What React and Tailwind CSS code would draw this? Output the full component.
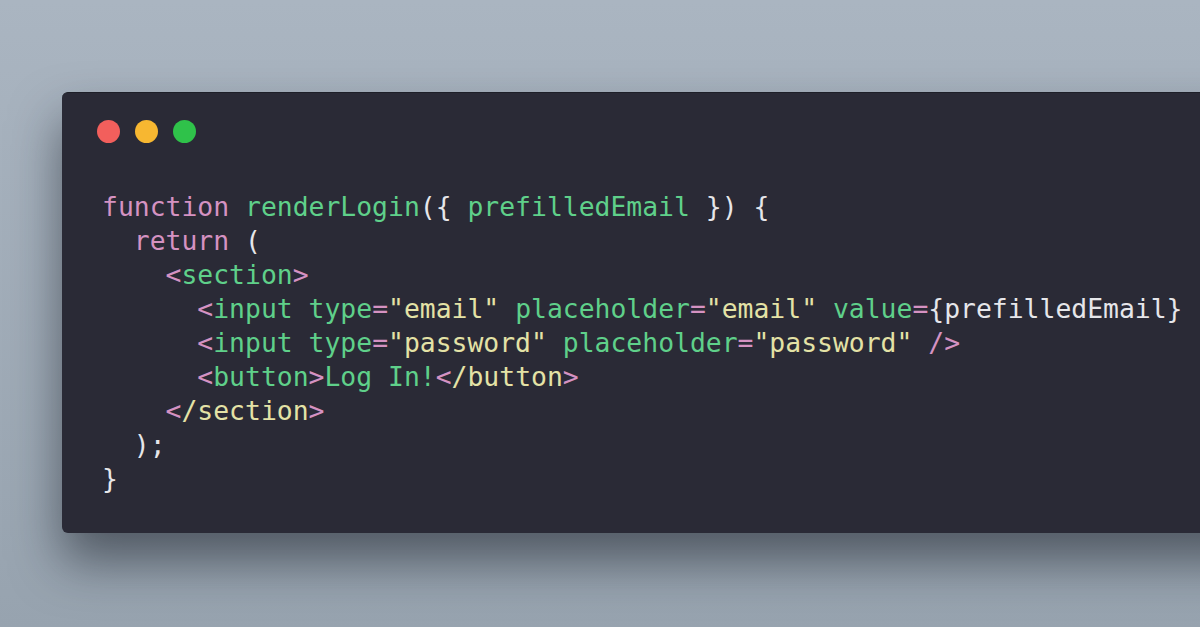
const P = "text-[#d592c2]"; // pink: keywords, brackets, equals
const G = "text-[#5fd08a]"; // green: names, tags, attrs
const Y = "text-[#e4e2a6]"; // yellow: strings
const W = "text-[#e6e6ea]"; // plain punctuation

const lines = [
  [[P, "function"], [W, " "], [G, "renderLogin"], [W, "({ "], [G, "prefilledEmail"], [W, " }) {"]],
  [[W, "  "], [P, "return"], [W, " ("]],
  [[W, "    "], [P, "<"], [G, "section"], [P, ">"]],
  [
    [W, "      "], [P, "<"], [G, "input type"], [P, "="], [Y, "\"email\""], [W, " "],
    [G, "placeholder"], [P, "="], [Y, "\"email\""], [W, " "], [G, "value"], [P, "="],
    [W, "{prefilledEmail}"],
  ],
  [
    [W, "      "], [P, "<"], [G, "input type"], [P, "="], [Y, "\"password\""], [W, " "],
    [G, "placeholder"], [P, "="], [Y, "\"password\""], [W, " "], [P, "/>"],
  ],
  [[W, "      "], [P, "<"], [G, "button"], [P, ">"], [G, "Log In!"], [P, "<"], [Y, "/button"], [P, ">"]],
  [[W, "    "], [P, "<"], [Y, "/section"], [P, ">"]],
  [[W, "  "], [W, ");"]],
  [[W, "}"]],
];

const App = () => {
  return (
    <div className="w-[1200px] h-[627px] overflow-hidden bg-gradient-to-b from-[#aab5c1] to-[#97a3af] pl-[62px] pt-[92px]">
      <div className="w-[1200px] h-[441px] rounded-[6px] bg-[#2a2a36] border-t border-[#1e1f28] shadow-[0_28px_50px_rgba(20,25,35,0.55)] pl-[35px] pt-[27px]">
        {/* window buttons */}
        <div className="flex gap-[15px]">
          <span className="w-[23px] h-[23px] rounded-full bg-[#f25f5c]" />
          <span className="w-[23px] h-[23px] rounded-full bg-[#f7b731]" />
          <span className="w-[23px] h-[23px] rounded-full bg-[#2fc24a]" />
        </div>

        {/* code */}
        <pre className="mt-[47px] ml-[5px] font-['DejaVu_Sans_Mono',monospace] text-[26.4px] leading-[34px] whitespace-pre">
          {lines.map((line, i) => (
            <div key={i}>
              {line.map(([cls, text], j) => (
                <span key={j} className={cls}>
                  {text}
                </span>
              ))}
            </div>
          ))}
        </pre>
      </div>
    </div>
  );
};

export default App;
